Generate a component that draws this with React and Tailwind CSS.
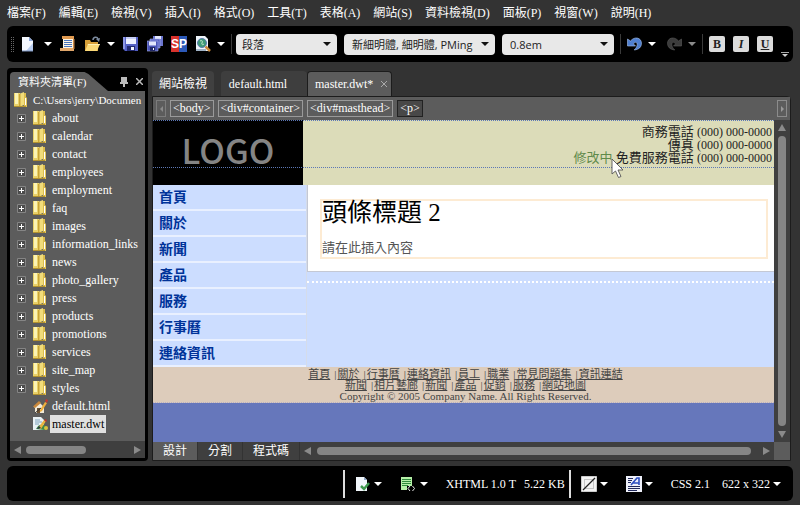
import React, { useState } from "react";

const menus = [
  "檔案(F)",
  "編輯(E)",
  "檢視(V)",
  "插入(I)",
  "格式(O)",
  "工具(T)",
  "表格(A)",
  "網站(S)",
  "資料檢視(D)",
  "面板(P)",
  "視窗(W)",
  "說明(H)",
];

const folders = [
  "about",
  "calendar",
  "contact",
  "employees",
  "employment",
  "faq",
  "images",
  "information_links",
  "news",
  "photo_gallery",
  "press",
  "products",
  "promotions",
  "services",
  "site_map",
  "styles",
];

const navLinks = ["首頁", "關於", "新聞", "產品", "服務", "行事曆", "連絡資訊"];

const footerRows = [
  ["首頁", "關於", "行事曆", "連絡資訊", "員工", "職業", "常見問題集", "資訊連結"],
  ["新聞", "相片藝廊", "新聞", "產品", "促銷", "服務", "網站地圖"],
];

const Caret = ({ className = "text-white" }) => (
  <svg width="8" height="4" viewBox="0 0 8 4" className={className}>
    <path d="M0 0h8L4 4z" fill="currentColor" />
  </svg>
);

const Triangle = ({ d }) => (
  <svg width="8" height="8" viewBox="0 0 8 8" className="text-[#8a8a8a]">
    <path d={d} fill="currentColor" />
  </svg>
);

const LEFT = "M7 0v8L0 4z";
const RIGHT = "M1 0v8l7-4z";
const UP = "M0 7h8L4 0z";
const DOWN = "M0 1h8L4 8z";

const FolderIcon = () => (
  <svg width="14" height="16" viewBox="0 0 14 16" className="shrink-0">
    <path d="M0 1h6v14H0z" fill="#e9d168" />
    <path d="M1 1h3v11H1z" fill="#fbf3b4" />
    <path d="M5 2 10 0v13l-5 2z" fill="#f1dc7a" />
    <path d="M5 2h1.500v13H5z" fill="#c9a436" />
    <path d="M10 1h2v13h-2z" fill="#dcbc4c" />
    <path d="M11 6h1.500v7H11z" fill="#fff" />
    <path d="m12 5 1 1v9h-3l2-1z" fill="#e4c65a" />
    <path d="M0 14.500h12" stroke="#b4932f" />
  </svg>
);

const HtmlFileIcon = () => (
  <svg width="15" height="15" viewBox="0 0 15 15" className="shrink-0">
    <path d="M1 8 6 3l5 5v6H2V9z" fill="#f1ead8" />
    <path d="M0 7.500 6 2l2 2-6 5z" fill="#c9883c" />
    <path d="M4 9h3v5H4z" fill="#6d5130" />
    <path d="M7 11 12 3l2 1-5 8-2 1z" fill="#efae3b" />
    <path d="m12 2 1-2 2 1-1 3z" fill="#c6352b" />
    <path d="M2 14 8 9" stroke="#333" />
  </svg>
);

const DwtFileIcon = () => (
  <svg width="15" height="14" viewBox="0 0 15 14" className="shrink-0">
    <path d="M0 0h8l3 3v10H0z" fill="#e9f1f5" />
    <path d="M2 3h5M2 5h7M2 7h4" stroke="#7fa3bd" />
    <path d="M3 12c2-4 4-5 8-4l3 3-3 2z" fill="#3c8a4b" />
    <path d="m5 11 6-8 2 1-5 8z" fill="#e9b33e" />
    <path d="m11 3 2-1 1 2-1 1z" fill="#b5352f" />
    <path d="m4 12 2-3 2 2z" fill="#26364a" />
    <circle cx="13" cy="11" r="2" fill="#d9c23c" />
  </svg>
);

const NewIcon = () => (
  <svg width="13" height="16" viewBox="0 0 13 16">
    <path d="M1 1h7l4 4v10H1z" fill="#f4f8ff" />
    <path d="M5 15 12 7v8z" fill="#b9cdf0" />
    <path d="M8 1v4h4z" fill="#8ba6d8" />
    <path d="M1 15h11" stroke="#7d93bd" />
  </svg>
);

const SiteIcon = () => (
  <svg width="16" height="16" viewBox="0 0 16 16">
    <path d="M2 0h12v3H2z" fill="#e09a50" />
    <path d="M3 3h11v10H3z" fill="#fff6e4" />
    <path d="M4 4.500h8M4 6.500h8M4 8.500h8M4 10.500h8" stroke="#4a74bd" />
    <path d="M0 12h14v3H0z" fill="#e0a66a" />
    <path d="M13 3h1.500v10H13z" fill="#c98a4a" />
  </svg>
);

const OpenIcon = () => (
  <svg width="17" height="16" viewBox="0 0 17 16">
    <path d="M1 4h5l1 2h7v9H1z" fill="#d79f38" />
    <path d="M4 8h12l-3 7H1z" fill="#fbd978" />
    <path d="M4 8h12l-.5 1H3.600z" fill="#fff0b5" />
    <path d="M9 4c0-3 4-4 5-1" stroke="#7d8ca0" strokeWidth="1.500" fill="none" />
    <path d="m12 3 4-1-1 4z" fill="#7d8ca0" />
  </svg>
);

const SaveIcon = () => (
  <svg width="16" height="16" viewBox="0 0 16 16">
    <path d="M0 1h15v14H2l-2-2z" fill="#5561c4" />
    <path d="M0 1h2v12H0z" fill="#8d97e6" />
    <path d="M3 1h10v7H3z" fill="#eef1ff" />
    <path d="M3 1h10v2H3z" fill="#c5cdf5" />
    <path d="M4 10h8v5H4z" fill="#232a72" />
    <path d="M8 11h3v3H8z" fill="#f4f6ff" />
  </svg>
);

const SaveAllIcon = () => (
  <svg width="16" height="16" viewBox="0 0 16 16">
    <path d="M6 0h10v10H6z" fill="#6b75cf" />
    <path d="M8 0h6v3H8z" fill="#e3e7fc" />
    <path d="M3 3h10v9H3z" fill="#5660c0" stroke="#a9b1ee" strokeWidth=".6" />
    <path d="M0 5h11v10H0z" fill="#4a54b6" stroke="#a9b1ee" strokeWidth=".6" />
    <path d="M2 5.500h7v4H2z" fill="#e3e7fc" />
    <path d="M3 11h5v4H3z" fill="#222968" />
    <path d="M6 12h1v2H6z" fill="#fff" />
  </svg>
);

const PreviewIcon = () => (
  <svg width="16" height="16" viewBox="0 0 16 16">
    <path d="M1 0h9l3 3v12H1z" fill="#eef4fa" />
    <path d="M1 13h10v2H1z" fill="#9fb2c6" />
    <circle cx="7" cy="7" r="4.500" fill="#3f9a76" stroke="#5c7bb0" />
    <path d="M5 5c2-1 3 0 2 2s1 2 2 1" stroke="#bfe8c8" fill="none" />
    <path d="m10.500 10.500 4.500 4.500" stroke="#c98a3c" strokeWidth="2.500" />
  </svg>
);

const UndoIcon = ({ fill, edge }) => (
  <svg width="15" height="14" viewBox="0 0 15 14">
    <path
      d="M.5 2v7h8L6.500 7C7.500 4.500 10.300 5 10.200 7.500c0 2-1 3.500-3 5.500C12 12.500 14.500 10 14.500 6.200 14.300.5 7.500-1 3.500 4z"
      fill={fill}
      stroke={edge}
      strokeWidth=".6"
    />
  </svg>
);

const Divider = () => <span className="h-5 w-px shrink-0 bg-[#3a3a3a]" />;

const ToolButton = ({ label, children, className = "" }) => (
  <button aria-label={label} className={`flex h-4 items-center ${className}`}>
    {children}
  </button>
);

const ToolSelect = ({ label, options, className, selectClass }) => (
  <div className={`relative ${className}`}>
    <select
      aria-label={label}
      className={`block h-[21px] w-full appearance-none rounded bg-[#e8e8e8] font-['Open_Sans','Noto_Sans_CJK_TC',sans-serif] text-[11px] leading-[21px] text-[#222] ${selectClass}`}
    >
      {options.map((o) => (
        <option key={o}>{o}</option>
      ))}
    </select>
    <span className="pointer-events-none absolute inset-y-0 right-1.5 flex items-center">
      <Caret className="text-[#111]" />
    </span>
  </div>
);

const Toolbar = () => (
  <div className="mx-[7px] flex h-9 items-center rounded-md bg-black pr-1 pl-1">
    <div className="grid grid-cols-2 gap-px">
      {Array.from({ length: 16 }).map((_, i) => (
        <span key={i} className="size-px bg-[#666]" />
      ))}
    </div>
    <div className="ml-[7px] flex items-center gap-2">
      <ToolButton label="開新檔案" className="gap-2.5">
        <NewIcon />
        <Caret />
      </ToolButton>
      <ToolButton label="網站">
        <SiteIcon />
      </ToolButton>
      <ToolButton label="開啟" className="gap-1.5">
        <OpenIcon />
        <Caret />
      </ToolButton>
      <ToolButton label="儲存">
        <SaveIcon />
      </ToolButton>
      <ToolButton label="全部儲存">
        <SaveAllIcon />
      </ToolButton>
      <button className="flex size-4 items-center justify-center bg-[linear-gradient(90deg,#d8322c_50%,#2c59b8_50%)] font-['Liberation_Sans',sans-serif] text-xs leading-4 font-bold text-white">
        SP
      </button>
      <ToolButton label="預覽" className="gap-1.5">
        <PreviewIcon />
        <Caret />
      </ToolButton>
    </div>
    <div className="ml-1.5 flex items-center gap-1">
      <Divider />
      <div className="flex gap-[7px]">
        <ToolSelect
          label="樣式"
          options={["段落", "標題 1", "標題 2"]}
          className="w-[101px]"
          selectClass="pl-1.5"
        />
        <ToolSelect
          label="字型"
          options={["新細明體, 細明體, PMing"]}
          className="w-[151px]"
          selectClass="pl-2"
        />
        <ToolSelect
          label="大小"
          options={["0.8em", "1em", "1.2em"]}
          className="w-28"
          selectClass="pl-2"
        />
      </div>
    </div>
    <div className="ml-1.5 flex items-center gap-1.5">
      <Divider />
      <ToolButton label="復原" className="gap-1.5">
        <UndoIcon fill="#4f7fd0" edge="#a9c4f0" />
        <Caret />
      </ToolButton>
    </div>
    <ToolButton label="取消復原" className="ml-[11px] gap-1.5">
      <span className="-scale-x-100">
        <UndoIcon fill="#3c3c3c" edge="#5a5a5a" />
      </span>
      <Caret className="text-[#8a8a8a]" />
    </ToolButton>
    <div className="ml-1.5 flex items-center gap-1.5">
      <Divider />
      <div className="flex gap-2 font-['Liberation_Serif',serif] text-xs leading-4 font-bold text-[#222]">
        <button className="size-4 rounded-xs bg-[#dcdcdc]">B</button>
        <button className="size-4 rounded-xs bg-[#dcdcdc] italic">I</button>
        <button className="size-4 rounded-xs bg-[#dcdcdc] underline">U</button>
      </div>
    </div>
    <button aria-label="其他按鈕" className="ml-auto self-end pb-1">
      <svg width="8" height="6" viewBox="0 0 8 6">
        <path d="M0 .5h8" stroke="#aaa" />
        <path d="M1 2h6L4 5z" fill="#ccc" />
      </svg>
    </button>
  </div>
);

const FolderPanel = () => {
  const [selected, setSelected] = useState("master.dwt");

  return (
    <aside className="flex w-[141px] shrink-0 flex-col rounded bg-black px-[3px] pt-1 pb-[3px]">
      <div className="flex h-[19px] items-center">
        <h2 className="h-full w-[98px] rounded-tl bg-[#5c5c5c] pl-2 text-[11px] leading-5 whitespace-nowrap text-white [clip-path:polygon(0_0,76%_0,80%_10%,100%_100%,0_100%)]">
          資料夾清單(F)
        </h2>
        <div className="ml-auto flex items-center gap-2 pr-0.5 text-[#bbb]">
          <button aria-label="自動隱藏">
            <svg width="8" height="10" viewBox="0 0 8 10">
              <path d="M1 0h6v5h1v2H0V5h1zM3 7h2v3H3z" fill="currentColor" />
            </svg>
          </button>
          <button aria-label="關閉">
            <svg width="7" height="7" viewBox="0 0 7 7">
              <path d="M0 0l7 7M7 0L0 7" stroke="currentColor" strokeWidth="1.500" />
            </svg>
          </button>
        </div>
      </div>
      <ul className="flex-1 bg-[#5c5c5c] text-xs leading-[18px] whitespace-nowrap text-white">
        <li className="flex h-[18px] items-center gap-[5px] pl-1 text-[11px]">
          <FolderIcon />
          {"C:\\Users\\jerry\\Documen"}
        </li>
        {folders.map((name) => (
          <li key={name} className="flex h-[18px] items-center pl-[7px]">
            <button aria-label={`展開 ${name}`} className="mr-[7px]">
              <svg width="9" height="9" viewBox="0 0 9 9">
                <path d="M.5.5h8v8h-8z" fill="#4c4c4c" stroke="#858585" />
                <path d="M2 4.500h5M4.500 2v5" stroke="#fff" />
              </svg>
            </button>
            <FolderIcon />
            <span className="pl-[5px]">{name}</span>
          </li>
        ))}
        {["default.html", "master.dwt"].map((name) => (
          <li key={name} className="flex h-[18px] items-center pl-[23px]">
            {name === "default.html" ? <HtmlFileIcon /> : <DwtFileIcon />}
            <button
              onClick={() => setSelected(name)}
              className={`ml-0.5 px-0.5 ${
                selected === name ? "bg-[#e0e0e0] text-black" : ""
              }`}
            >
              {name}
            </button>
          </li>
        ))}
      </ul>
      <div className="flex h-[17px] items-center gap-1 bg-[#3f3f3f] px-1">
        <Triangle d={LEFT} />
        <div className="flex-1">
          <div className="h-2 w-[60px] rounded-full bg-[#858585]" />
        </div>
        <Triangle d={RIGHT} />
      </div>
    </aside>
  );
};

const Crumb = ({ active, children }) => (
  <button
    className={`h-[17px] border px-0.5 ${
      active ? "border-[#222] bg-[#484848]" : "border-[#9a9a9a]"
    }`}
  >
    {children}
  </button>
);

const Phone = () => <span className="text-xs leading-3">(000) 000-0000</span>;

const Masthead = () => (
  <header className="relative flex h-[65px] bg-[#dcdcb9]">
    <div className="w-[150px] bg-black pt-1 text-center font-['Noto_Sans_CJK_TC',sans-serif] text-[34px] leading-[52px] font-medium text-[#858585]">
      LOGO
    </div>
    <div className="flex-1 pt-[5px] pr-0.5 text-right text-[13px] leading-[13px] text-[#222]">
      <p className="h-[13px]">
        商務電話 <Phone />
      </p>
      <p className="h-[13px]">
        傳真 <Phone />
      </p>
      <p className="h-[13px]">
        <span className="text-[#5f8a4a]">修改中</span> 免費服務電話 <Phone />
      </p>
    </div>
    <div className="pointer-events-none absolute inset-x-0 top-0 h-12 border-y border-dotted border-[#5d78b5]" />
    <svg
      width="13"
      height="21"
      viewBox="0 0 13 21"
      className="absolute top-[38px] right-[150px]"
    >
      <path
        d="M1 1v15l3.500-3 3 6.500 2.500-1-3-6.500H12z"
        fill="#fff"
        stroke="#555"
        strokeWidth=".9"
      />
    </svg>
  </header>
);

const DesignView = () => (
  <div className="flex min-w-0 flex-1 flex-col bg-[#6677bb]">
    <Masthead />
    <div className="flex">
      <nav className="w-[154px] border-r border-[#d5dcea] bg-[#ccddff]">
        {navLinks.map((name) => (
          <a
            key={name}
            href="#"
            className="block h-[26px] border-b-2 border-[#e9f0ff] pl-1.5 text-[14px] leading-[25px] font-bold text-[#003399]"
          >
            {name}
          </a>
        ))}
      </nav>
      <main className="flex-1 bg-[#ccddff]">
        <div className="border-b border-l border-[#c4c8d4] bg-white pt-3.5 pr-1.5 pb-3 pl-3">
          <div className="border-2 border-[#fdebd3]">
            <h1 className="text-[25px] leading-6 text-black">頭條標題 2</h1>
            <p className="pt-3.5 text-[13px] leading-[18px] text-[#555]">
              請在此插入內容
            </p>
          </div>
        </div>
        <div className="mt-[9px] border-t-2 border-dotted border-white" />
      </main>
    </div>
    <footer className="border-b border-dotted border-[#b9b0c4] bg-[#ddccbb] pt-0.5 pl-1 text-center text-[11px] leading-[11px] text-[#444]">
      {footerRows.map((row, r) => (
        <p key={r}>
          {row.map((name, i) => (
            <span key={i}>
              {i > 0 && <span className="pr-px pl-1">|</span>}
              <a href="#" className="underline">
                {name}
              </a>
            </span>
          ))}
        </p>
      ))}
      <p>Copyright © 2005 Company Name. All Rights Reserved.</p>
    </footer>
  </div>
);

const Editor = () => {
  const [view, setView] = useState("設計");

  return (
    <section className="flex min-w-0 flex-1 flex-col pt-[3px] text-xs text-white">
      <div className="flex h-[25px] items-stretch leading-5">
        <button className="w-[62px] rounded-t bg-[#404040]">網站檢視</button>
        <button className="ml-[7px] w-[86px] rounded-t bg-[#3e3e3e] pr-3">
          default.html
        </button>
        <button className="flex w-[85px] items-center justify-between rounded-t border border-b-0 border-[#1c1c1c] bg-[#5c5c5c] px-[7px] pr-1">
          master.dwt*
          <svg width="6" height="6" viewBox="0 0 6 6">
            <path d="M0 0l6 6M6 0L0 6" stroke="#aaa" />
          </svg>
        </button>
      </div>
      <div className="flex flex-1 flex-col rounded-tr border border-[#1c1c1c] bg-[#3f3f3f]">
        <div className="flex h-[23px] items-center gap-1 bg-[#5c5c5c] px-[3px] leading-[15px]">
          <button className="flex h-[17px] w-2.5 items-center justify-center border border-[#7c7c7c]">
            <svg width="3" height="6" viewBox="0 0 3 6">
              <path d="M3 0v6L0 3z" fill="#8a8a8a" />
            </svg>
          </button>
          <Crumb>{"<body>"}</Crumb>
          <Crumb>{"<div#container>"}</Crumb>
          <Crumb>{"<div#masthead>"}</Crumb>
          <Crumb active>{"<p>"}</Crumb>
          <button className="ml-auto flex h-[17px] w-2.5 items-center justify-center border border-[#8c8c8c]">
            <svg width="3" height="6" viewBox="0 0 3 6">
              <path d="M0 0v6l3-3z" fill="#999" />
            </svg>
          </button>
        </div>
        <div className="flex flex-1">
          <DesignView />
          <div className="flex w-4 flex-col items-center gap-1 py-1">
            <Triangle d={UP} />
            <div className="w-2 flex-1 rounded-full bg-[#858585]" />
            <Triangle d={DOWN} />
          </div>
        </div>
        <div className="flex h-[18px] items-center">
          {["設計", "分割", "程式碼"].map((name) => (
            <button
              key={name}
              onClick={() => setView(name)}
              className={`h-full border-r border-[#333] px-2.5 leading-4 ${
                view === name ? "bg-[#5c5c5c]" : ""
              }`}
            >
              {name}
            </button>
          ))}
          <div className="flex flex-1 items-center gap-[5px] px-1">
            <Triangle d={LEFT} />
            <div className="mr-1.5 h-2 flex-1 rounded-full bg-[#858585]" />
            <Triangle d={RIGHT} />
          </div>
          <div className="h-full w-4 bg-[#5c5c5c]" />
        </div>
      </div>
    </section>
  );
};

const StatusBar = () => (
  <footer className="mx-[7px] mt-[5px] mb-1 flex h-[35px] items-center justify-end rounded-md bg-black pr-3 text-xs text-white">
    <span className="h-7 w-0.5 bg-[#ddd]" />
    <ToolButton label="相容性檢查" className="ml-2.5 gap-1">
      <svg width="15" height="16" viewBox="0 0 15 16">
        <path d="M1 1h8l3 3v11H1z" fill="#f1f6fb" />
        <path d="M9 1v3h3z" fill="#8fa7c8" />
        <path d="m6 10 3 3 5-6" stroke="#3f9a4e" strokeWidth="2.500" fill="none" />
      </svg>
      <Caret />
    </ToolButton>
    <ToolButton label="視覺輔助" className="ml-[18px] gap-1">
      <svg width="16" height="16" viewBox="0 0 16 16">
        <path d="M1 1h11v13H1z" fill="#b6f0a8" />
        <path d="M2 3.500h9M2 5.500h9M2 7.500h9M2 9.500h6" stroke="#2f8a3c" />
        <path d="M7 10h8v5H7z" fill="#000" />
        <path d="m10 10-2 2.500 2 2.500M12.500 10l2 2.500-2 2.500" stroke="#e8e8e8" fill="none" />
      </svg>
      <Caret />
    </ToolButton>
    <span className="ml-[18px]">XHTML 1.0 T</span>
    <span className="ml-2">5.22 KB</span>
    <span className="ml-1 h-7 w-0.5 bg-[#ddd]" />
    <ToolButton label="樣式應用" className="ml-2.5 gap-[3px]">
      <svg width="16" height="16" viewBox="0 0 16 16">
        <path d="M.5.5h15v15H.5z" fill="#f4f4f4" stroke="#ccc" />
        <path d="M3.500 3.500h9v9h-9z" fill="none" stroke="#999" strokeDasharray="1 1" />
        <path d="M2 14 14 2" stroke="#222" strokeWidth="1.200" />
      </svg>
      <Caret />
    </ToolButton>
    <ToolButton label="樣式" className="ml-[18px] gap-[3px]">
      <svg width="16" height="16" viewBox="0 0 16 16">
        <path d="M0 0h16v16H0z" fill="#eef0fa" />
        <path d="M2 2.500h5M2 4.500h4M2 6.500h3M2 10.500h12M2 12.500h12M2 14.500h9" stroke="#222a5c" />
        <path d="m5 9 6-7h2v7M7 7h6" stroke="#2c4ec0" strokeWidth="1.600" fill="none" />
      </svg>
      <Caret />
    </ToolButton>
    <span className="ml-[18px]">CSS 2.1</span>
    <button className="ml-3 flex items-center gap-[3px]">
      622 x 322
      <Caret />
    </button>
  </footer>
);

const App = () => {
  return (
    <div className="flex min-h-screen flex-col bg-[#333] font-['Liberation_Serif','Noto_Sans_CJK_TC',serif]">
      {/* Menu */}
      <nav className="flex h-[26px] items-center gap-[13px] pl-[7px] text-xs whitespace-nowrap text-white">
        {menus.map((m) => (
          <button key={m}>{m}</button>
        ))}
      </nav>
      <Toolbar />
      {/* Panels */}
      <div className="mt-[6px] flex flex-1 gap-1 pr-[9px] pl-[7px]">
        <FolderPanel />
        <Editor />
      </div>
      <StatusBar />
    </div>
  );
};

export default App;
